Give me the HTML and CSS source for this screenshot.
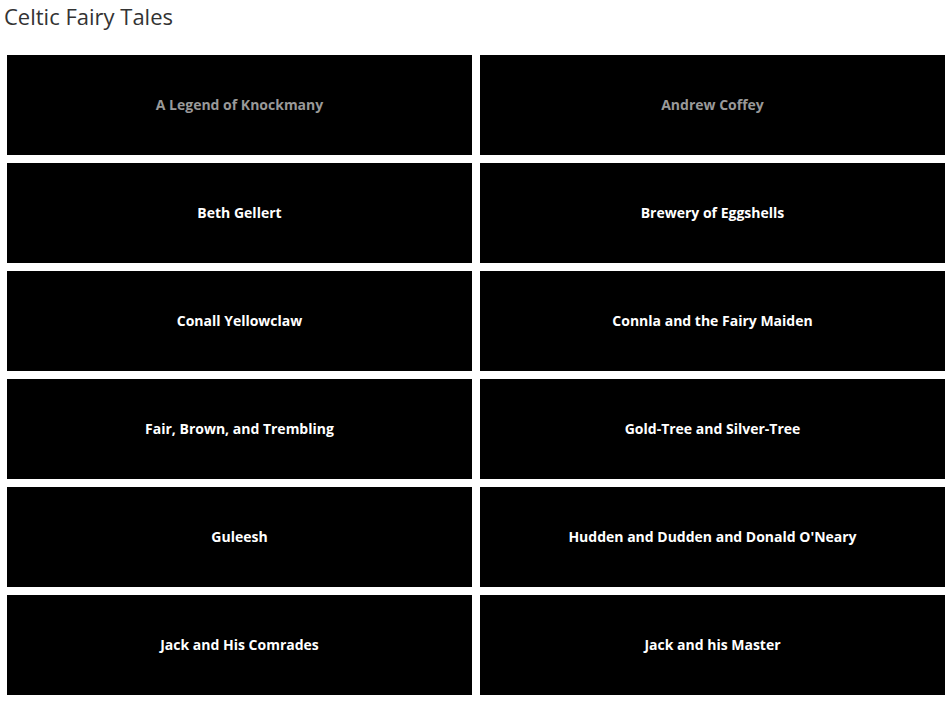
FILE: index.html
```html
<!DOCTYPE html>
<html>
<head>
<meta charset="utf-8">
<link rel="stylesheet" href="styles.css">
</head>
<body>
<h1 class="title">Celtic Fairy Tales</h1>
<div class="grid">
  <a class="tile visited">A Legend of Knockmany</a>
  <a class="tile visited">Andrew Coffey</a>
  <a class="tile">Beth Gellert</a>
  <a class="tile">Brewery of Eggshells</a>
  <a class="tile">Conall Yellowclaw</a>
  <a class="tile">Connla and the Fairy Maiden</a>
  <a class="tile">Fair, Brown, and Trembling</a>
  <a class="tile">Gold-Tree and Silver-Tree</a>
  <a class="tile">Guleesh</a>
  <a class="tile">Hudden and Dudden and Donald O'Neary</a>
  <a class="tile">Jack and His Comrades</a>
  <a class="tile">Jack and his Master</a>
</div>
</body>
</html>
```
FILE: styles.css
```css
html, body {
  margin: 0;
  padding: 0;
  background: #fff;
  font-family: "Open Sans", sans-serif;
}
.title {
  margin: 0;
  padding: 1px 0 0 4px;
  height: 53px;
  box-sizing: border-box;
  font-size: 22px;
  font-weight: 400;
  line-height: 30px;
  color: #333;
}
.grid {
  display: grid;
  grid-template-columns: 465px 465px;
  gap: 8px;
  padding: 2px 0 0 7px;
}
.tile {
  display: flex;
  align-items: center;
  justify-content: center;
  height: 100px;
  box-sizing: border-box;
  padding-bottom: 2px;
  background: #000;
  color: #fff;
  font-size: 14px;
  font-weight: 700;
  text-decoration: none;
}
.tile.visited {
  color: #999;
}
```
